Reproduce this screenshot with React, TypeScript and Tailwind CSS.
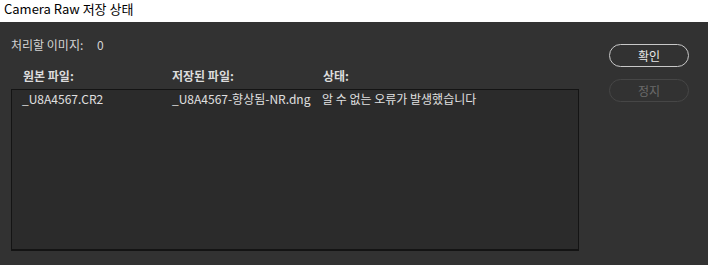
const font = "font-['Malgun_Gothic','Noto_Sans_CJK_KR','Noto_Sans',sans-serif]";

const rows = [
  {
    source: '_U8A4567.CR2',
    saved: '_U8A4567-향상됨-NR.dng',
    status: '알 수 없는 오류가 발생했습니다',
  },
];

export default function App() {
  return (
    <div className={`w-[708px] h-[265px] flex flex-col ${font} antialiased`}>
      <div className="h-[22px] bg-white px-[4px] text-[13px] leading-[18px] text-black">
        Camera Raw 저장 상태
      </div>

      <div className="flex-1 flex bg-[#323232] text-[#d4d4d4] text-[12px]">
        <div className="w-[579px] pl-[11px] flex flex-col">
          <div className="pt-[15px] h-[46px] leading-[16px] flex">
            <span className="w-[86px]">처리할 이미지:</span>
            <span>0</span>
          </div>

          <div className="h-[21px] flex leading-[16px] font-semibold text-[#dcdcdc] pl-[12px]">
            <span className="w-[149px]">원본 파일:</span>
            <span className="w-[151px]">저장된 파일:</span>
            <span>상태:</span>
          </div>

          <div className="h-[162px] border border-[#141414] border-b-2 bg-[#2b2b2b] pl-[10px] pt-[1px]">
            {rows.map((r) => (
              <div key={r.source} className="flex leading-[16px] text-[#e0e0e0]">
                <span className="w-[150px]">{r.source}</span>
                <span className="w-[150px]">{r.saved}</span>
                <span>{r.status}</span>
              </div>
            ))}
          </div>
        </div>

        <div className="pl-[30px] pt-[22px] flex flex-col gap-[12px]">
          <button className="w-[80px] h-[23px] rounded-full border-[1.5px] border-[#c8c8c8] text-[#e8e8e8] text-[12px] leading-none">
            확인
          </button>
          <button className="w-[80px] h-[23px] rounded-full border border-[#464646] text-[#6a6a6a] text-[12px] leading-none">
            정지
          </button>
        </div>
      </div>
    </div>
  );
}
